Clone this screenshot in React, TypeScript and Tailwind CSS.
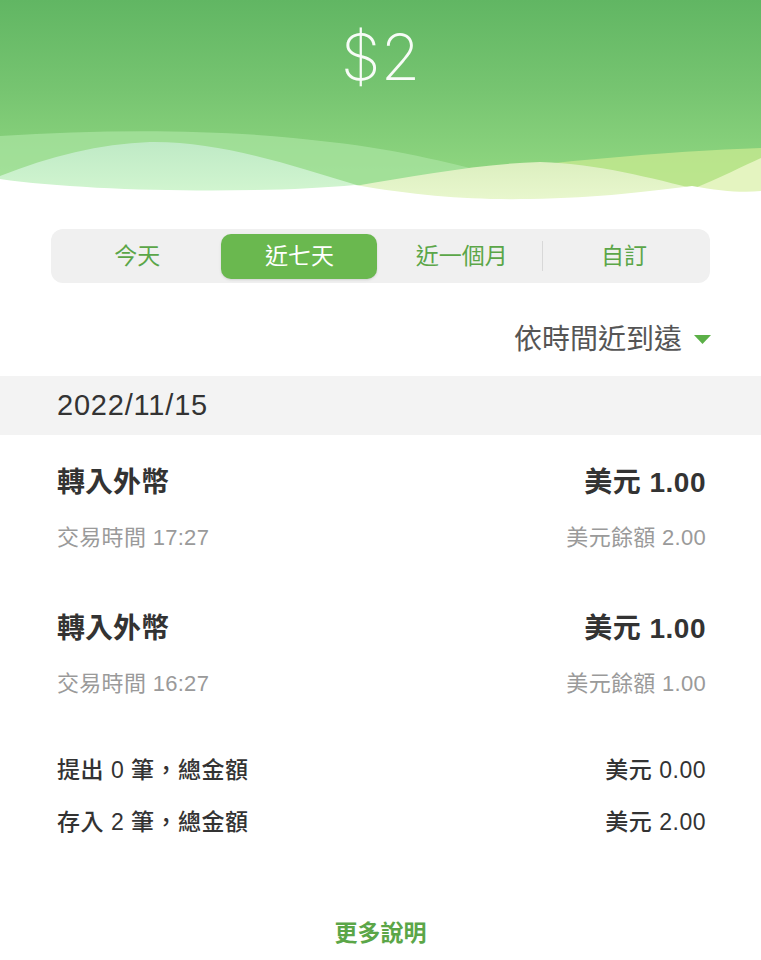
import React from "react";

const F = "font-['Liberation_Sans','Noto_Sans_CJK_TC',sans-serif]";

function Header() {
  return (
    <div className="relative h-[205px] w-full overflow-hidden">
      <svg className="absolute inset-0 h-full w-full" viewBox="0 0 761 205" preserveAspectRatio="none">
        <defs>
          <linearGradient id="bg" x1="0" y1="0" x2="0" y2="1">
            <stop offset="0" stopColor="#61b663" />
            <stop offset="0.45" stopColor="#77c571" />
            <stop offset="0.85" stopColor="#8fd680" />
          </linearGradient>
          <linearGradient id="mint" x1="0" y1="0" x2="0" y2="1">
            <stop offset="0" stopColor="#bfeac6" />
            <stop offset="1" stopColor="#d6f8d2" />
          </linearGradient>
          <linearGradient id="pale" x1="0" y1="0" x2="0" y2="1">
            <stop offset="0" stopColor="#dcefc0" />
            <stop offset="1" stopColor="#eaf8cf" />
          </linearGradient>
        </defs>
        <rect x="0" y="0" width="761" height="205" fill="url(#bg)" />
        <path d="M0,136 C120,128 240,130 330,142 C420,152 480,172 545,186 L545,205 L0,205Z" fill="#a8e3a0" opacity="0.75" />
        <path d="M545,164 C620,156 700,150 761,148 L761,205 L545,205Z" fill="#c6e890" opacity="0.8" />
        <path d="M0,176 C50,156 100,144 150,142 C220,141 290,165 360,186 L360,205 L0,205Z" fill="url(#mint)" />
        <path d="M355,186 C420,175 480,164 540,162 C600,164 650,178 700,190 L700,205 L355,205Z" fill="url(#pale)" />
        <path d="M690,190 C720,178 745,165 761,158 L761,205 L690,205Z" fill="#e4f4c0" />
        <path d="M0,179 C90,192 260,194 355,185 C420,196 470,200 530,199 C600,198 650,191 692,186 C720,191 742,193 761,191 L761,205 L0,205Z" fill="#ffffff" />
      </svg>
      <div className="relative flex justify-center pt-[17px]">
        <span className="font-['Inter',sans-serif] text-[64px] font-extralight leading-[80px] text-white/95">$2</span>
      </div>
    </div>
  );
}

function Tabs() {
  const tabs = ["今天", "近七天", "近一個月", "自訂"];
  return (
    <div className="mx-[51px] mt-[24px] grid h-[54px] grid-cols-4 items-center rounded-[12px] bg-[#f0f0f0] px-[5px]">
      {tabs.map((t, i) => (
        <div key={t} className="relative flex h-full items-center justify-center">
          {i === 1 ? (
            <div className="flex h-[45px] w-[156px] items-center justify-center rounded-[10px] bg-[#6ab84f] text-[23px] text-white shadow-sm">
              {t}
            </div>
          ) : (
            <span className="text-[23px] text-[#5ba648]">{t}</span>
          )}
          {i === 2 && <div className="absolute right-0 top-[12px] h-[30px] w-px bg-[#d8d8d8]" />}
        </div>
      ))}
    </div>
  );
}

function Item({ time, balance }: { time: string; balance: string }) {
  return (
    <div className="pl-[57px] pr-[55px]">
      <div className="flex items-center justify-between leading-[40px]">
        <span className="text-[28px] font-bold text-[#333]">轉入外幣</span>
        <span className="text-[28px] font-bold tracking-[0.5px] text-[#333]">美元 1.00</span>
      </div>
      <div className="mt-[20px] flex items-center justify-between leading-[30px]">
        <span className="text-[22px] tracking-[0.3px] text-[#9a9a9a]">交易時間 {time}</span>
        <span className="text-[22px] tracking-[0.3px] text-[#9a9a9a]">美元餘額 {balance}</span>
      </div>
    </div>
  );
}

export default function App() {
  return (
    <div className={`${F} min-h-[960px] w-full bg-white`}>
      <Header />
      <Tabs />
      <div className="mt-[38px] flex items-center justify-end gap-[12px] pr-[50px] leading-[38px]">
        <span className="text-[28px] text-[#555]">依時間近到遠</span>
        <svg width="17" height="10" viewBox="0 0 17 10">
          <path d="M0,0 L17,0 L8.5,9 Z" fill="#5bb047" />
        </svg>
      </div>
      <div className="mt-[17px] flex h-[59px] items-center bg-[#f3f3f3] pl-[57px]">
        <span className="text-[29px] tracking-[0.8px] text-[#333]">2022/11/15</span>
      </div>
      <div className="pt-[28px]">
        <Item time="17:27" balance="2.00" />
      </div>
      <div className="pt-[56px]">
        <Item time="16:27" balance="1.00" />
      </div>
      <div className="mt-[56px] pl-[57px] pr-[55px]">
        <div className="flex items-center justify-between leading-[30px]">
          <span className="text-[23px] font-medium tracking-[0.5px] text-[#333]">提出 0 筆，總金額</span>
          <span className="text-[23px] font-medium tracking-[0.5px] text-[#333]">美元 0.00</span>
        </div>
        <div className="mt-[22px] flex items-center justify-between leading-[30px]">
          <span className="text-[23px] font-medium tracking-[0.5px] text-[#333]">存入 2 筆，總金額</span>
          <span className="text-[23px] font-medium tracking-[0.5px] text-[#333]">美元 2.00</span>
        </div>
      </div>
      <div className="mt-[81px] flex justify-center leading-[30px]">
        <span className="text-[23px] font-bold text-[#5ba648]">更多說明</span>
      </div>
    </div>
  );
}
